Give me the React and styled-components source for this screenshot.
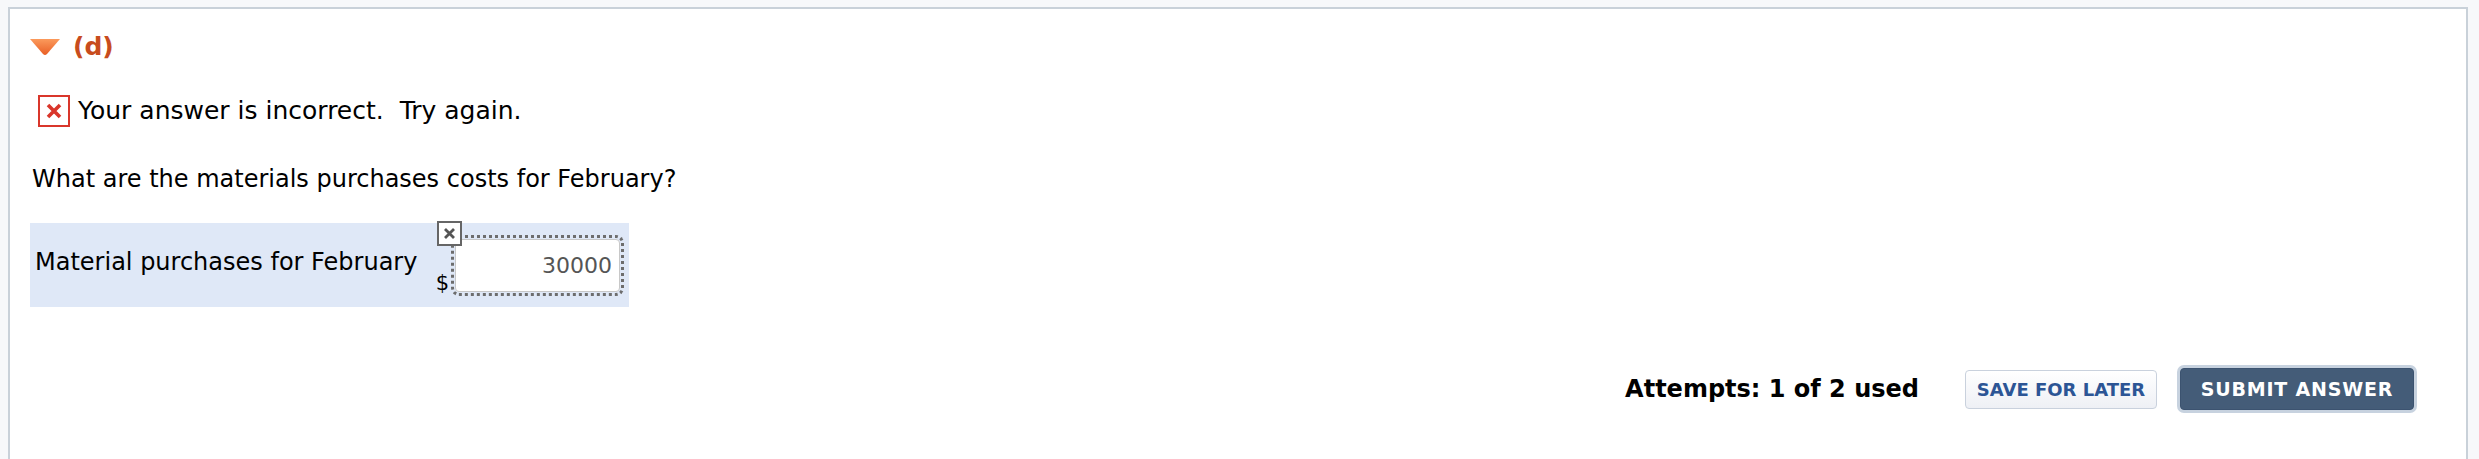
import React, { useState } from 'react';
import styled, { createGlobalStyle } from 'styled-components';

const GlobalStyle = createGlobalStyle`
    html, body {
        margin: 0;
        padding: 0;
        background: #f7f8fa;
        font-family: "DejaVu Sans", Verdana, sans-serif;
        color: #000;
        overflow: hidden;
    }
`;

const Panel = styled.div`
    margin: 7px 11px 0 8px;
    min-height: 452px;
    background: #fff;
    border: 2px solid #c9d1d9;
    border-bottom: none;
    padding: 0 20px;
    box-sizing: border-box;
`;

const PartHeading = styled.div`
    display: flex;
    align-items: center;
    gap: 13px;
    height: 24px;
    margin-top: 26px;
    font-size: 25px;
    line-height: 24px;
    font-weight: bold;
    color: #c84c1d;
`;

const Feedback = styled.div`
    display: flex;
    align-items: center;
    gap: 8px;
    height: 32px;
    margin: 36px 0 0 8px;
    font-size: 25px;
    line-height: 32px;
`;

const WrongIcon = styled.span`
    width: 32px;
    height: 32px;
    box-sizing: border-box;
    border: 2px solid #d9362b;
    display: flex;
    align-items: center;
    justify-content: center;
`;

const Question = styled.p`
    margin: 40px 0 0 2px;
    font-size: 24px;
    line-height: 24px;
`;

const AnswerRow = styled.div`
    display: flex;
    align-items: center;
    justify-content: space-between;
    width: 599px;
    height: 84px;
    margin-top: 32px;
    padding: 0 9px 0 5px;
    box-sizing: border-box;
    background: #dfe8f7;
`;

const RowLabel = styled.label`
    font-size: 24px;
    line-height: 28px;
    margin-bottom: 6px;
`;

const InputGroup = styled.div`
    display: flex;
    align-items: flex-end;
    gap: 6px;
`;

const Currency = styled.span`
    font-size: 21px;
    line-height: 18px;
`;

const InputWrap = styled.div`
    position: relative;
`;

const ClearButton = styled.span`
    position: absolute;
    left: -18px;
    top: -18px;
    width: 25px;
    height: 25px;
    box-sizing: border-box;
    border: 2px solid #666;
    background: #fff;
    display: flex;
    align-items: center;
    justify-content: center;
    z-index: 1;
`;

const AmountInput = styled.input`
    display: block;
    width: 165px;
    height: 53px;
    box-sizing: border-box;
    border: 1px solid #c8c8c8;
    border-radius: 4px;
    outline: 3px dotted #6d6d6d;
    outline-offset: 1px;
    padding: 0 7px 0 0;
    font-family: inherit;
    font-size: 22px;
    color: #555;
    text-align: right;
    background: #fff;
`;

const Actions = styled.div`
    display: flex;
    align-items: center;
    justify-content: flex-end;
    height: 48px;
    margin-top: 58px;
    margin-right: 32px;
`;

const Attempts = styled.span`
    font-size: 24px;
    font-weight: bold;
    margin-right: 46px;
`;

const Button = styled.button`
    height: ${(p) => (p.$primary ? '42px' : '39px')};
    width: ${(p) => p.$w}px;
    padding: 0;
    box-sizing: border-box;
    border-radius: 4px;
    font-family: inherit;
    font-size: ${(p) => (p.$primary ? '19px' : '18px')};
    letter-spacing: ${(p) => (p.$primary ? '0.8px' : '0')};
    font-weight: bold;
    text-transform: uppercase;
    cursor: pointer;
    border: ${(p) => (p.$primary ? '1px solid #3c5370' : '1px solid #c9d1dd')};
    background: ${(p) =>
        p.$primary ? '#445c78' : 'linear-gradient(#ffffff, #eef0f5)'};
    color: ${(p) => (p.$primary ? '#fff' : '#2c5595')};
    box-shadow: ${(p) => (p.$primary ? '0 0 0 3px #c7d2df' : 'none')};
    margin-left: ${(p) => (p.$primary ? '23px' : '0')};
`;

const Triangle = () => (
    <svg width="30" height="16" viewBox="0 0 30 16">
        <defs>
            <linearGradient id="tri" x1="0" y1="0" x2="0" y2="1">
                <stop offset="0" stopColor="#fb9a5c" />
                <stop offset="1" stopColor="#e95f25" />
            </linearGradient>
        </defs>
        <path d="M0 0 H30 L17 15 Q15 17 13 15 Z" fill="url(#tri)" />
    </svg>
);

const RedX = () => (
    <svg width="16" height="16" viewBox="0 0 16 16">
        <path d="M2 2 L14 14 M14 2 L2 14" stroke="#d9362b" strokeWidth="3.6" />
    </svg>
);

const GrayX = () => (
    <svg width="13" height="13" viewBox="0 0 13 13">
        <path d="M2 2 L11 11 M11 2 L2 11" stroke="#555" strokeWidth="2.8" />
    </svg>
);

const App = () => {
    const [amount, setAmount] = useState('30000');

    return (
        <>
            <GlobalStyle />
            <Panel>
                <PartHeading>
                    <Triangle />
                    (d)
                </PartHeading>

                <Feedback>
                    <WrongIcon>
                        <RedX />
                    </WrongIcon>
                    Your answer is incorrect.&nbsp; Try again.
                </Feedback>

                <Question>What are the materials purchases costs for February?</Question>

                <AnswerRow>
                    <RowLabel htmlFor="purchases">Material purchases for February</RowLabel>
                    <InputGroup>
                        <Currency>$</Currency>
                        <InputWrap>
                            <ClearButton>
                                <GrayX />
                            </ClearButton>
                            <AmountInput
                                id="purchases"
                                value={amount}
                                onChange={(e) => setAmount(e.target.value)}
                            />
                        </InputWrap>
                    </InputGroup>
                </AnswerRow>

                <Actions>
                    <Attempts>Attempts: 1 of 2 used</Attempts>
                    <Button $w={192}>Save for Later</Button>
                    <Button $primary $w={234}>Submit Answer</Button>
                </Actions>
            </Panel>
        </>
    );
};

export default App;
